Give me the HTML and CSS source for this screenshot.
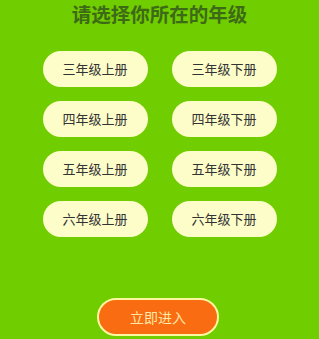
FILE: index.html
```html
<!DOCTYPE html>
<html lang="zh">
<head>
    <meta charset="UTF-8">
    <meta name="viewport" content="width=device-width, initial-scale=1.0">
    <title>选择年级</title>
    <link rel="stylesheet" href="styles.css">
</head>
<body>

<div class="heading">请选择你所在的年级</div>

<div class="grades">
    <div class="grade">三年级上册</div>
    <div class="grade">三年级下册</div>
    <div class="grade">四年级上册</div>
    <div class="grade">四年级下册</div>
    <div class="grade">五年级上册</div>
    <div class="grade">五年级下册</div>
    <div class="grade">六年级上册</div>
    <div class="grade">六年级下册</div>
</div>

<div class="footer">
    <div class="enter">立即进入</div>
</div>

</body>
</html>
```

FILE: styles.css
```css
body{
    margin: 0;
    width: 319px;
    height: 339px;
    overflow: hidden;
    background-color: #70cd00;
    font-family: "Noto Sans CJK SC", "Noto Sans", sans-serif;
}
.heading{
    height: 24px;
    padding-top: 2px;
    text-align: center;
    font-size: 19.5px;
    font-weight: bold;
    line-height: 24px;
    color: #3d6a16;
}
.grades{
    display: grid;
    grid-template-columns: 105px 105px;
    column-gap: 24px;
    row-gap: 14px;
    justify-content: center;
    margin-top: 25px;
}
.grade{
    height: 36px;
    line-height: 36px;
    text-align: center;
    background-color: #fdfdca;
    border-radius: 18px;
    font-size: 13px;
    color: #333;
}
.footer{
    display: flex;
    justify-content: center;
    margin-top: 61px;
    padding-right: 3px;
}
.enter{
    width: 118px;
    height: 34px;
    line-height: 34px;
    text-align: center;
    background-color: #f96c12;
    border: 2px solid #fbf6a0;
    border-radius: 20px;
    font-size: 14px;
    color: #ffe9a8;
}
```
